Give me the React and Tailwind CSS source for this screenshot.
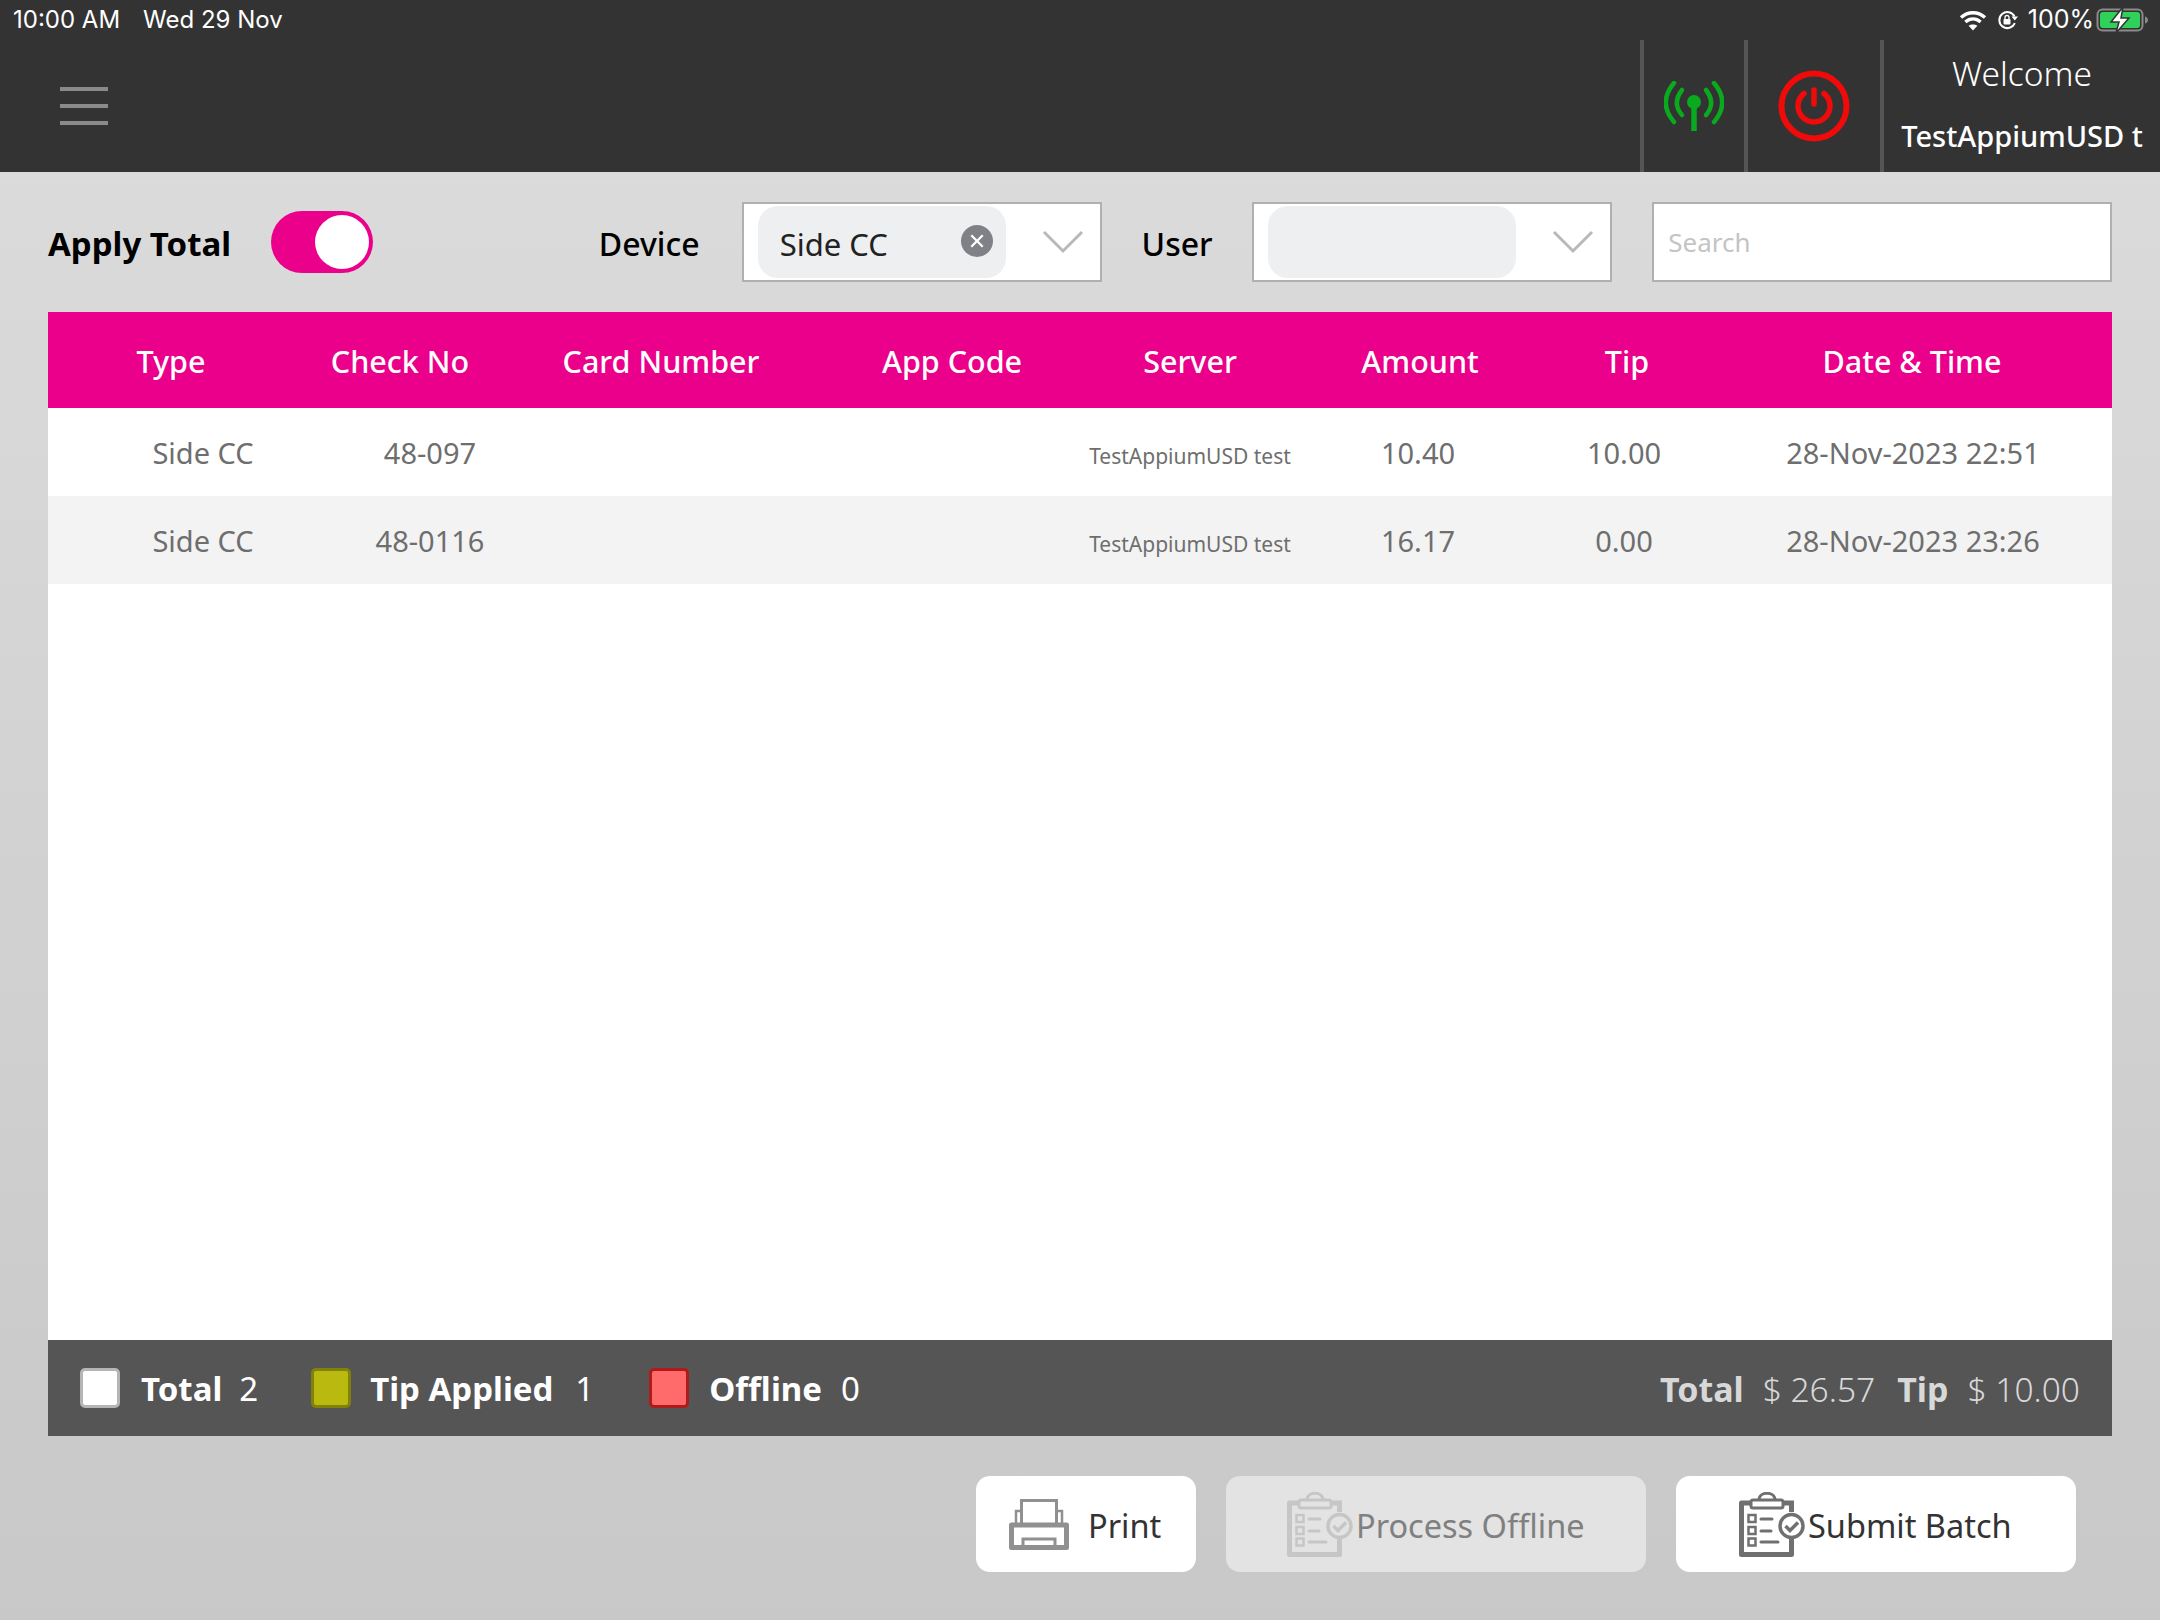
const headCols = [
  ['Type', 'w-[246px]'],
  ['Check No', 'w-[212px]'],
  ['Card Number', 'w-[310px]'],
  ['App Code', 'w-[272px]'],
  ['Server', 'w-[204px]'],
  ['Amount', 'w-[256px]'],
  ['Tip', 'w-[158px] mr-[6px]'],
  ['Date & Time', 'w-[400px]'],
]

const rows = [
  { type: 'Side CC', check: '48-097', server: 'TestAppiumUSD test', amount: '10.40', tip: '10.00', date: '28-Nov-2023 22:51' },
  { type: 'Side CC', check: '48-0116', server: 'TestAppiumUSD test', amount: '16.17', tip: '0.00', date: '28-Nov-2023 23:26' },
]

function Wifi() {
  return (
    <svg width="28" height="21" viewBox="0 0 28 21" fill="none" stroke="white" strokeWidth="3.4">
      <path d="M2 7.5C9 1.2 19 1.2 26 7.5" />
      <path d="M6.4 12C11 8 17 8 21.6 12" />
      <path d="M14 20.5L9.6 15.8C12 14 16 14 18.4 15.8Z" fill="white" stroke="none" />
    </svg>
  )
}

function RotationLock() {
  return (
    <svg width="22" height="20" viewBox="0 0 22 20" fill="none">
      <path d="M17.5 6.5A8 8 0 1 0 17.8 13" stroke="white" strokeWidth="2" />
      <path d="M14.5 6.5h6.5l-3.2 4z" fill="white" />
      <rect x="6.5" y="9" width="7" height="5.5" rx="1" fill="white" />
      <path d="M8 9V7.5a2 2 0 0 1 4 0V9" stroke="white" strokeWidth="1.3" />
    </svg>
  )
}

function Battery() {
  return (
    <svg width="54" height="26" viewBox="0 0 54 26" fill="none">
      <rect x="1.5" y="2.5" width="45" height="21" rx="5" stroke="#8a8a8a" strokeWidth="2" />
      <rect x="4" y="5" width="40" height="16" rx="3" fill="#30d158" />
      <path d="M49 9.5c2 .5 3 2 3 3.500s-1 3-3 3.500z" fill="#8a8a8a" />
      <path d="M27 0L15 15h8l-3 11 13-15h-8z" fill="white" stroke="#333333" strokeWidth="1.500" />
    </svg>
  )
}

function Antenna() {
  return (
    <svg width="60" height="50" viewBox="0 0 60 50" fill="none" stroke="#0aaa1e" strokeWidth="4.500" strokeLinecap="round">
      <path d="M10 2C-1 15 -1 28 10 41" />
      <path d="M18 9C11 18 11 26 18 34" />
      <path d="M50 2C61 15 61 28 50 41" />
      <path d="M42 9C49 18 49 26 42 34" />
      <circle cx="30" cy="21" r="7" fill="#0aaa1e" stroke="none" />
      <path d="M30 24V50" strokeWidth="5.500" strokeLinecap="butt" />
    </svg>
  )
}

function Power() {
  return (
    <svg width="72" height="72" viewBox="0 0 72 72" fill="none" stroke="#f00a0a">
      <circle cx="36" cy="36" r="32.500" strokeWidth="6" />
      <path d="M26 23.500A16 16 0 1 0 46 23.500" strokeWidth="5.500" strokeLinecap="round" />
      <path d="M36 20V34" strokeWidth="5.500" strokeLinecap="round" />
    </svg>
  )
}

function Chevron() {
  return (
    <svg width="42" height="24" viewBox="0 0 42 24" fill="none" stroke="#b9b9b9" strokeWidth="3">
      <path d="M2 2L21 21L40 2" />
    </svg>
  )
}

function Printer() {
  return (
    <svg width="60" height="51" viewBox="0 0 60 51" fill="none" stroke="#909090">
      <path d="M12.500 25V1.500H47.500V25" strokeWidth="3" />
      <path d="M7 25V12H12M48 12H53V25" strokeWidth="2.500" />
      <path d="M2.500 26H57.500V48.500H2.500Z" strokeWidth="5" strokeLinejoin="round" />
      <path d="M14 48V40H46V48" strokeWidth="3" />
    </svg>
  )
}

function ClipboardCheck({ color, fill }) {
  return (
    <svg width="66" height="65" viewBox="0 0 66 65" fill="none" stroke={color}>
      <path d="M11 11H2.500V62.500H52.500V44" strokeWidth="5" strokeLinejoin="round" />
      <path d="M45 11H52.500V20" strokeWidth="5" />
      <path d="M20 8C20 -1 36 -1 36 8" strokeWidth="3" />
      <rect x="12" y="8" width="32" height="8" rx="2" strokeWidth="3" />
      <rect x="9.500" y="23" width="7" height="7" strokeWidth="2.500" />
      <rect x="9.500" y="35" width="7" height="7" strokeWidth="2.500" />
      <rect x="9.500" y="46.500" width="7" height="7" strokeWidth="2.500" />
      <path d="M22 27H33M22 39H32M22 50H39" strokeWidth="3" strokeLinecap="round" />
      <circle cx="52.500" cy="34" r="11.500" fill={fill} strokeWidth="3.500" />
      <path d="M46.500 34L51 38.500L59 30.500" strokeWidth="3.500" />
    </svg>
  )
}

function Swatch({ className }) {
  return <span className={`w-10 h-10 rounded-[5px] border-[3px] ${className}`} />
}

function Field({ children, className }) {
  return <div className={`h-20 bg-white border-2 border-[#b0b0b0] flex items-center ${className}`}>{children}</div>
}

export default function App() {
  return (
    <div className="w-full h-screen flex flex-col bg-gradient-to-b from-[#dddddd] to-[#c8c8c8] font-['Noto_Sans',sans-serif] overflow-hidden">
      {/* Header */}
      <header className="h-[172px] bg-[#333333] text-white shrink-0 flex flex-col">
        <div className="h-10 flex items-center justify-between pl-[13px] pr-[10px] font-['Inter',sans-serif] text-[24px]">
          <div className="flex gap-[23px]">
            <span>10:00 AM</span>
            <span>Wed 29 Nov</span>
          </div>
          <div className="flex items-center gap-[10px]">
            <Wifi />
            <RotationLock />
            <span className="-ml-[1px] text-[25px]">100%</span>
            <span className="-ml-[8px]"><Battery /></span>
          </div>
        </div>
        <div className="flex-1 flex items-stretch">
          <div className="flex-1 flex items-center pl-[60px]">
            <div className="w-12 flex flex-col gap-[13px] -mt-[1px]">
              <span className="h-1 bg-[#8a8a8a]" />
              <span className="h-1 bg-[#8a8a8a]" />
              <span className="h-1 bg-[#8a8a8a]" />
            </div>
          </div>
          <div className="w-[104px] border-l-4 border-[#555555] flex items-center justify-center">
            <Antenna />
          </div>
          <div className="w-[136px] border-l-4 border-[#555555] flex items-center justify-center">
            <Power />
          </div>
          <div className="w-[280px] border-l-4 border-[#555555] flex flex-col items-center text-center whitespace-nowrap">
            <span className="text-[33.500px] font-light leading-[46px] mt-[10px]">Welcome</span>
            <span className="text-[29px] font-medium leading-[42px] mt-[19px]">TestAppiumUSD t</span>
          </div>
        </div>
      </header>

      {/* Filters */}
      <div className="h-[140px] shrink-0 flex items-center px-12">
        <span className="text-[33px] font-bold text-black w-[223px] pt-[3px]">Apply Total</span>
        <div className="w-[102px] h-[62px] rounded-full bg-[#eb008b] flex items-center justify-end pr-1">
          <span className="w-[54px] h-[54px] rounded-full bg-white" />
        </div>
        <span className="text-[32px] font-medium text-black ml-[226px] w-[143px] pt-[4px]">Device</span>
        <Field className="w-[360px] pl-[14px] pr-[16px] justify-between">
          <div className="w-[248px] h-[72px] rounded-[20px] bg-[#eeeff1] flex items-center justify-between pl-[22px] pr-[13px]">
            <span className="text-[31px] text-[#222222] pt-[4px]">Side CC</span>
            <span className="w-8 h-8 rounded-full bg-[#808087] flex items-center justify-center -mt-[2px]">
              <svg width="16" height="16" viewBox="0 0 14 14" stroke="white" strokeWidth="2">
                <path d="M2 2L12 12M12 2L2 12" />
              </svg>
            </span>
          </div>
          <Chevron />
        </Field>
        <span className="text-[32px] font-medium text-black ml-[40px] w-[111px] pt-[4px]">User</span>
        <Field className="w-[360px] pl-[14px] pr-[16px] justify-between">
          <div className="w-[248px] h-[72px] rounded-[20px] bg-[#eeeff1]" />
          <Chevron />
        </Field>
        <Field className="w-[460px] ml-[40px] pl-[14px]">
          <span className="text-[26px] text-[#c4c4c4]">Search</span>
        </Field>
      </div>

      {/* Table */}
      <div className="mx-12 flex-1 flex flex-col bg-white">
        <div className="h-24 shrink-0 bg-[#eb008b] flex items-center text-white text-[30.500px] font-medium text-center pt-[4px]">
          {headCols.map(([label, width]) => (
            <span key={label} className={width}>{label}</span>
          ))}
        </div>
        <div className="flex-1">
          {rows.map((row, i) => (
            <div
              key={row.check}
              className={`h-[88px] grid grid-cols-[310px_144px_538px_300px_156px_256px_322px] items-center text-center text-[29px] text-[#6e6e6e] ${i % 2 ? 'bg-[#f3f3f3]' : 'bg-white'}`}
            >
              <span className="pt-[2px]">{row.type}</span>
              <span className="pt-[2px]">{row.check}</span>
              <span />
              <span className="text-[21px] pt-[10px]">{row.server}</span>
              <span className="pt-[2px]">{row.amount}</span>
              <span className="pt-[2px]">{row.tip}</span>
              <span className="pt-[2px]">{row.date}</span>
            </div>
          ))}
        </div>
        {/* Summary */}
        <div className="h-24 shrink-0 bg-[#555555] flex items-center justify-between pl-8 pr-8 text-[33px]">
          <div className="flex items-center text-white">
            <Swatch className="bg-white border-[#b5b5b5]" />
            <b className="ml-[21px] pt-[2px]">Total</b>
            <span className="ml-[17px] pt-[2px]">2</span>
            <span className="ml-[53px] flex items-center">
              <Swatch className="bg-[#b9b90f] border-[#82820a]" />
            </span>
            <b className="ml-[19px] pt-[2px]">Tip Applied</b>
            <span className="ml-[22px] pt-[2px]">1</span>
            <span className="ml-[55px] flex items-center">
              <Swatch className="bg-[#ff6b6b] border-[#b01a1a]" />
            </span>
            <b className="ml-[20px] pt-[2px]">Offline</b>
            <span className="ml-[19px] pt-[2px]">0</span>
          </div>
          <div className="flex items-center text-[#d8d8d8] text-[34px] pt-[2px]">
            <b>Total</b>
            <span className="ml-[19px] font-light text-[33.500px]">$ 26.57</span>
            <b className="ml-[22px]">Tip</b>
            <span className="ml-[19px] font-light text-[33.500px]">$ 10.00</span>
          </div>
        </div>
      </div>

      {/* Actions */}
      <div className="h-[184px] shrink-0 flex justify-end items-start gap-[30px] pt-10 pr-[84px] text-[32.500px]">
        <button className="w-[220px] h-24 rounded-[14px] bg-white text-[#333333] flex items-center pl-[33px] gap-[19px]">
          <Printer />
          <span className="pt-[4px]">Print</span>
        </button>
        <button className="w-[420px] h-24 rounded-[14px] bg-[#e3e3e3] text-[#808080] flex items-center pl-[61px] gap-[3px]">
          <ClipboardCheck color="#c6c6c6" fill="#e3e3e3" />
          <span className="pt-[4px]">Process Offline</span>
        </button>
        <button className="w-[400px] h-24 rounded-[14px] bg-white text-[#333333] flex items-center pl-[63px] gap-[3px]">
          <ClipboardCheck color="#707070" fill="#ffffff" />
          <span className="pt-[4px]">Submit Batch</span>
        </button>
      </div>
    </div>
  )
}
